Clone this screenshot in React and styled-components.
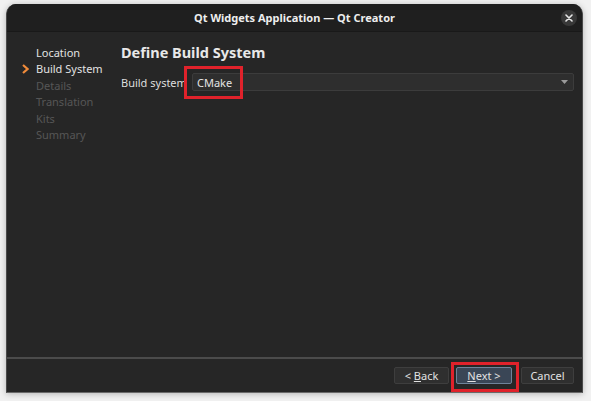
import React from 'react';
import styled, { createGlobalStyle } from 'styled-components';

const Global = createGlobalStyle`
  html, body { margin: 0; padding: 0; background: #f1f1f1; }
  body { font-family: "Noto Sans", "DejaVu Sans", sans-serif; }
`;

const steps = [
  { label: 'Location', done: true },
  { label: 'Build System', done: true, current: true },
  { label: 'Details' },
  { label: 'Translation' },
  { label: 'Kits' },
  { label: 'Summary' },
];

export default function App() {
  return (
    <Page>
      <Global />
      <Window>
        <TitleBar>
          <Title>Qt Widgets Application — Qt Creator</Title>
          <CloseBtn>
            <svg width="8" height="8" viewBox="0 0 8 8">
              <path d="M1 1L7 7M7 1L1 7" stroke="#e6e6e6" strokeWidth="1.6" strokeLinecap="round" />
            </svg>
          </CloseBtn>
        </TitleBar>
        <Content>
          <Sidebar>
            {steps.map((s) => (
              <Step key={s.label} active={s.done}>
                <Marker>
                  {s.current && (
                    <svg width="7" height="10" viewBox="0 0 7 10">
                      <path d="M1 1L5.5 5L1 9" stroke="#ef8a3a" strokeWidth="2.2" fill="none" />
                    </svg>
                  )}
                </Marker>
                {s.label}
              </Step>
            ))}
          </Sidebar>
          <Main>
            <Heading>Define Build System</Heading>
            <Row>
              <Label>Build system</Label>
              <Combo>
                <Highlight left={-9} top={-8} width={59} height={33} />
                <span>CMake</span>
                <svg width="7" height="4" viewBox="0 0 7 4">
                  <path d="M0 0H7L3.5 4Z" fill="#9a9a9a" />
                </svg>
              </Combo>
            </Row>
          </Main>
        </Content>
        <Separator />
        <Footer>
          <Button width={55}>&lt;&nbsp;<u>B</u>ack</Button>
          <Button width={56} primary>
            <Highlight left={-6} top={-6} width={68} height={30} />
            <u>N</u>ext&nbsp;&gt;
          </Button>
          <Button width={53} gap={2}>Cancel</Button>
        </Footer>
      </Window>
    </Page>
  );
}

const Page = styled.div`
  padding: 4px 8px 8px 6px;
`;

const Window = styled.div`
  width: 577px;
  height: 389px;
  background: #262626;
  border-radius: 10px 10px 0 0;
  box-shadow: 0 1px 6px rgba(0, 0, 0, 0.25);
  display: flex;
  flex-direction: column;
  overflow: hidden;
  border-left: 1px solid #4a4a4a;
  border-right: 1px solid #4a4a4a;
  border-bottom: 1px solid #6a6a6a;
  box-sizing: border-box;
`;

const TitleBar = styled.div`
  height: 27px;
  flex-shrink: 0;
  background: #1f1f1f;
  border-bottom: 1px solid #191919;
  display: flex;
  align-items: center;
  justify-content: center;
  position: relative;
`;

const Title = styled.div`
  color: #eeeeee;
  font-size: 11px;
  font-weight: 700;
`;

const CloseBtn = styled.div`
  position: absolute;
  right: 5px;
  top: 6px;
  width: 16px;
  height: 16px;
  border-radius: 50%;
  background: #383838;
  display: flex;
  align-items: center;
  justify-content: center;
`;

const Content = styled.div`
  flex: 1;
  display: flex;
`;

const Sidebar = styled.div`
  width: 114px;
  padding: 12px 0 0 15px;
  box-sizing: border-box;
  display: flex;
  flex-direction: column;
`;

const Step = styled.div`
  display: flex;
  align-items: center;
  height: 16.5px;
  font-size: 11px;
  color: ${(p) => (p.active ? '#e2e2e2' : '#565656')};
`;

const Marker = styled.div`
  width: 14px;
  display: flex;
  align-items: center;
`;

const Main = styled.div`
  flex: 1;
  padding: 10px 8px 0 0;
  display: flex;
  flex-direction: column;
`;

const Heading = styled.div`
  color: #e8e8e8;
  font-size: 14.5px;
  font-weight: 700;
  line-height: 20px;
`;

const Row = styled.div`
  margin-top: 11px;
  display: flex;
  align-items: center;
`;

const Label = styled.div`
  width: 71px;
  color: #dedede;
  font-size: 11px;
`;

const Combo = styled.div`
  position: relative;
  flex: 1;
  height: 16px;
  background: #2e2e2e;
  border: 1px solid #3c3c3c;
  border-radius: 2px;
  display: flex;
  align-items: center;
  justify-content: space-between;
  padding: 0 5px 0 4px;
  color: #e4e4e4;
  font-size: 11px;
`;

const Highlight = styled.div`
  position: absolute;
  left: ${(p) => p.left}px;
  top: ${(p) => p.top}px;
  width: ${(p) => p.width}px;
  height: ${(p) => p.height}px;
  border: 3px solid #e0222b;
  box-sizing: border-box;
  pointer-events: none;
`;

const Separator = styled.div`
  height: 2px;
  background: #4b4b4b;
  flex-shrink: 0;
`;

const Footer = styled.div`
  height: 33px;
  display: flex;
  align-items: center;
  justify-content: flex-end;
  gap: 7px;
  padding-right: 8px;
`;

const Button = styled.div`
  position: relative;
  width: ${(p) => p.width}px;
  height: 17px;
  box-sizing: border-box;
  margin-left: ${(p) => p.gap || 0}px;
  border-radius: 2px;
  background: ${(p) => (p.primary ? '#3a4656' : '#2f2f2f')};
  border: 1px solid ${(p) => (p.primary ? '#6f839a' : '#3e3e3e')};
  color: #e2e2e2;
  font-size: 11px;
  display: flex;
  align-items: center;
  justify-content: center;
  u { text-decoration: underline; }
`;
